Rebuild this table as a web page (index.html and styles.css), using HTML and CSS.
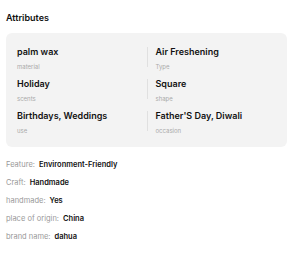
FILE: index.html
```html
<!DOCTYPE html>
<html>
<head>
<meta charset="utf-8">
<link rel="stylesheet" href="styles.css">
</head>
<body>
<section class="attrs">
  <h2 class="attrs-title">Attributes</h2>
  <div class="attrs-card">
    <div class="attr">
      <div class="attr-value">palm wax</div>
      <div class="attr-name">material</div>
    </div>
    <div class="attr">
      <div class="attr-value">Air Freshening</div>
      <div class="attr-name">Type</div>
    </div>
    <div class="attr">
      <div class="attr-value">Holiday</div>
      <div class="attr-name">scents</div>
    </div>
    <div class="attr">
      <div class="attr-value">Square</div>
      <div class="attr-name">shape</div>
    </div>
    <div class="attr">
      <div class="attr-value">Birthdays, Weddings</div>
      <div class="attr-name">use</div>
    </div>
    <div class="attr">
      <div class="attr-value">Father'S Day, Diwali</div>
      <div class="attr-name">occasion</div>
    </div>
  </div>
  <ul class="props">
    <li><span class="prop-key">Feature:</span><span class="prop-val">Environment-Friendly</span></li>
    <li><span class="prop-key">Craft:</span><span class="prop-val">Handmade</span></li>
    <li><span class="prop-key">handmade:</span><span class="prop-val">Yes</span></li>
    <li><span class="prop-key">place of origin:</span><span class="prop-val">China</span></li>
    <li><span class="prop-key">brand name:</span><span class="prop-val">dahua</span></li>
  </ul>
</section>
</body>
</html>
```

FILE: styles.css
```css
* { box-sizing: border-box; }
html, body { margin: 0; padding: 0; background: #fff; }
body {
  font-family: Inter, "Noto Sans", sans-serif;
  color: #111;
}
.attrs { padding: 12px 13px 0 6px; }
.attrs-title {
  margin: 0;
  font-size: 9px;
  font-weight: 600;
  line-height: 12px;
}
.attrs-card {
  margin-top: 9px;
  background: #f3f3f3;
  border-radius: 6px;
  padding: 12px 11px 12px 11px;
  display: grid;
  grid-template-columns: 1fr 1fr;
  row-gap: 6px;
}
.attr {
  position: relative;
  padding-right: 8px;
}
.attr:nth-child(even) { padding-left: 9px; }
/* short separator between the two columns */
.attr:nth-child(even)::before {
  content: "";
  position: absolute;
  left: 0;
  top: 2px;
  width: 1px;
  height: 20px;
  background: #e0e0e0;
}
.attr-value {
  font-size: 9px;
  font-weight: 600;
  line-height: 13px;
}
.attr-name {
  margin-top: 5px;
  font-size: 6px;
  color: #aaa;
  line-height: 8px;
}
.props {
  list-style: none;
  margin: 13px 0 0;
  padding: 0;
  display: flex;
  flex-direction: column;
  gap: 8px;
}
.props li {
  font-size: 7.5px;
  line-height: 10px;
  display: flex;
  gap: 4px;
}
.prop-key { color: #999; }
.prop-val { font-weight: 600; color: #111; }
```
